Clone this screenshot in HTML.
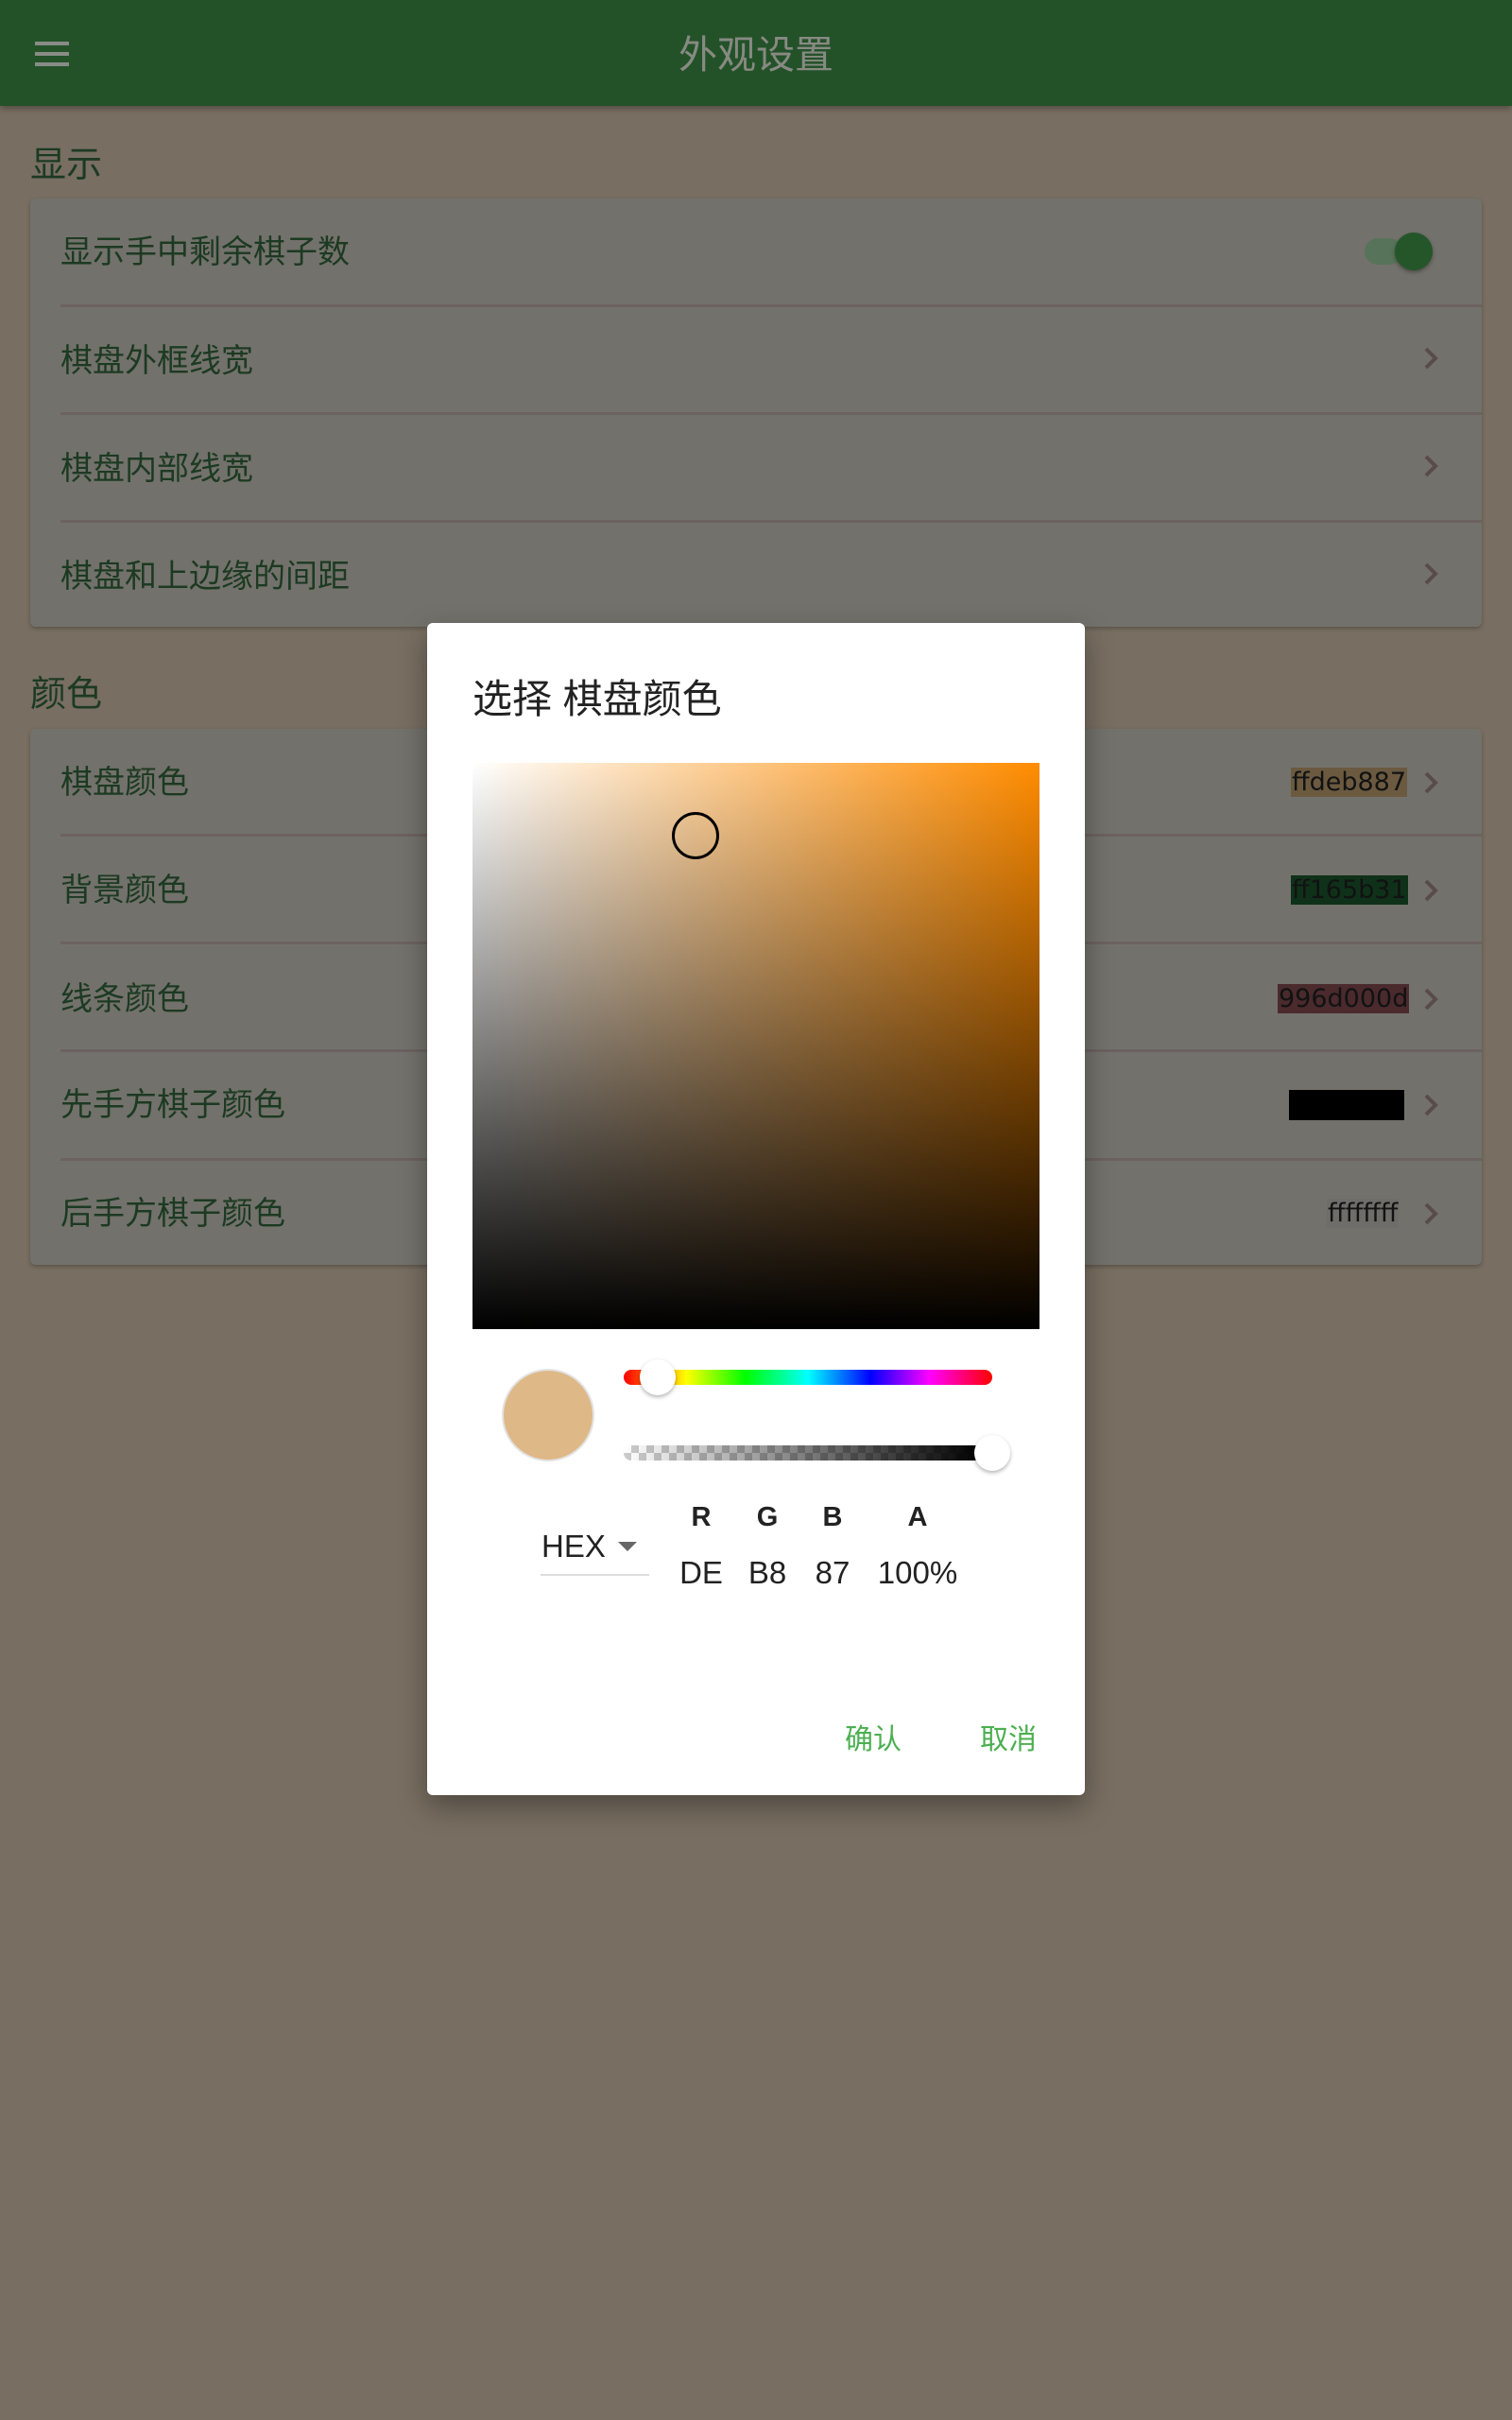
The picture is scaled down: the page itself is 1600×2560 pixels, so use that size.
<!DOCTYPE html>
<html><head><meta charset="utf-8"><style>
*{margin:0;padding:0;box-sizing:border-box}
body{width:1600px;height:2560px;background:#786e61;position:relative;overflow:hidden;font-family:"Liberation Sans","Noto Sans CJK SC",sans-serif}
.bar{position:absolute;left:0;top:0;width:1600px;height:112px;background:#235229;box-shadow:0 3px 6px rgba(0,0,0,.3)}
.title{position:absolute;left:0;width:1600px;top:30px;text-align:center;font-size:41px;color:#878a82;line-height:56px}
.ham{position:absolute;left:37px;width:36px;height:4px;background:#888c86}
.sec{position:absolute;left:32px;font-size:38px;color:#1c3a22;line-height:50px}
.card{position:absolute;left:32px;width:1536px;background:#73716b;border-radius:6px;box-shadow:0 2px 4px rgba(0,0,0,.25)}
.row{position:absolute;left:32px;font-size:34px;color:#1c3a22;line-height:44px}
.div{position:absolute;left:32px;width:1504px;height:3px;background:#6c6260}
.chev{position:absolute;left:1462px;width:40px;height:40px}
.sw{position:absolute;font-family:"DejaVu Sans",sans-serif;font-size:27px;color:#121212;line-height:31px;padding:0 1px}
.dlg{position:absolute;left:452px;top:659px;width:696px;height:1240px;background:#fff;border-radius:6px;box-shadow:0 12px 30px rgba(0,0,0,.35)}
.lbl{position:absolute;font-size:29px;font-weight:bold;color:#222;width:60px;text-align:center;margin-left:-30px}
.val{position:absolute;font-size:33px;color:#222;width:100px;text-align:center;margin-left:-50px}
</style></head><body>
<div class="bar">
<div class="ham" style="top:44px"></div><div class="ham" style="top:55px"></div><div class="ham" style="top:66px"></div>
<div class="title">外观设置</div>
</div>
<div class="sec" style="top:150px">显示</div>
<div class="card" style="top:210px;height:453px">
<div class="row" style="top:35px">显示手中剩余棋子数</div>
<div style="position:absolute;left:1412px;top:42px;width:40px;height:28px;border-radius:14px;background:#57735a"></div>
<div style="position:absolute;left:1444px;top:36px;width:40px;height:40px;border-radius:50%;background:#245629;box-shadow:0 2px 4px rgba(0,0,0,.35)"></div>
<div class="div" style="top:112px"></div>
<div class="row" style="top:150px">棋盘外框线宽</div>
<svg class="chev" style="top:149px" viewBox="0 0 40 40"><path d="M15 10 L25 20 L15 30" stroke="#5a4b4b" stroke-width="4" fill="none"/></svg>
<div class="div" style="top:226px"></div>
<div class="row" style="top:264px">棋盘内部线宽</div>
<svg class="chev" style="top:263px" viewBox="0 0 40 40"><path d="M15 10 L25 20 L15 30" stroke="#5a4b4b" stroke-width="4" fill="none"/></svg>
<div class="div" style="top:340px"></div>
<div class="row" style="top:378px">棋盘和上边缘的间距</div>
<svg class="chev" style="top:377px" viewBox="0 0 40 40"><path d="M15 10 L25 20 L15 30" stroke="#5a4b4b" stroke-width="4" fill="none"/></svg>
</div>
<div class="sec" style="top:710px">颜色</div>
<div class="card" style="top:771px;height:567px">
<div class="row" style="top:35px">棋盘颜色</div>
<div class="sw" style="left:1334px;top:41px;background:#6b5a40">ffdeb887</div>
<svg class="chev" style="top:37px" viewBox="0 0 40 40"><path d="M15 10 L25 20 L15 30" stroke="#5a4b4b" stroke-width="4" fill="none"/></svg>
<div class="div" style="top:111px"></div>
<div class="row" style="top:149px">背景颜色</div>
<div class="sw" style="left:1334px;top:155px;background:#0f3119">ff165b31</div>
<svg class="chev" style="top:151px" viewBox="0 0 40 40"><path d="M15 10 L25 20 L15 30" stroke="#5a4b4b" stroke-width="4" fill="none"/></svg>
<div class="div" style="top:225px"></div>
<div class="row" style="top:264px">线条颜色</div>
<div class="sw" style="left:1320px;top:270px;background:#4a2a2d">996d000d</div>
<svg class="chev" style="top:266px" viewBox="0 0 40 40"><path d="M15 10 L25 20 L15 30" stroke="#5a4b4b" stroke-width="4" fill="none"/></svg>
<div class="div" style="top:339px"></div>
<div class="row" style="top:376px">先手方棋子颜色</div>
<div style="position:absolute;left:1332px;top:382px;width:122px;height:32px;background:#000"></div>
<svg class="chev" style="top:378px" viewBox="0 0 40 40"><path d="M15 10 L25 20 L15 30" stroke="#5a4b4b" stroke-width="4" fill="none"/></svg>
<div class="div" style="top:454px"></div>
<div class="row" style="top:491px">后手方棋子颜色</div>
<div class="sw" style="left:1372px;top:497px;background:#6e6d69">ffffffff</div>
<svg class="chev" style="top:493px" viewBox="0 0 40 40"><path d="M15 10 L25 20 L15 30" stroke="#5a4b4b" stroke-width="4" fill="none"/></svg>
</div>
<div class="dlg">
<div style="position:absolute;left:48px;top:56px;font-size:42px;color:#222;line-height:50px">选择 棋盘颜色</div>
<div style="position:absolute;left:48px;top:148px;width:600px;height:599px;background:linear-gradient(to top,#000,rgba(0,0,0,0)),linear-gradient(to right,#fff,#ff8c00)"></div>
<div style="position:absolute;left:259px;top:200px;width:50px;height:50px;border:3px solid #000;border-radius:50%"></div>
<div style="position:absolute;left:79px;top:789px;width:98px;height:98px;border-radius:50%;background:#deb887;border:2px solid #e2e2e2"></div>
<div style="position:absolute;left:208px;top:790px;width:390px;height:16px;border-radius:8px;background:linear-gradient(to right,#f00,#ff0 17%,#0f0 33%,#0ff 50%,#00f 67%,#f0f 83%,#f00)"></div>
<div style="position:absolute;left:225px;top:779px;width:38px;height:38px;border-radius:50%;background:#fff;box-shadow:0 2px 4px rgba(0,0,0,.3)"></div>
<div style="position:absolute;left:208px;top:870px;width:378px;height:16px;border-radius:8px 0 0 8px;background:linear-gradient(to right,rgba(0,0,0,0),#000),repeating-conic-gradient(#ccc 0 25%,#fff 0 50%) 0 0/16px 16px"></div>
<div style="position:absolute;left:579px;top:859px;width:38px;height:38px;border-radius:50%;background:#fff;box-shadow:0 2px 4px rgba(0,0,0,.3)"></div>
<div style="position:absolute;left:121px;top:958px;font-size:33px;color:#222">HEX</div>
<svg style="position:absolute;left:200px;top:970px" width="24" height="14"><path d="M2 2 L22 2 L12 12Z" fill="#666"/></svg>
<div style="position:absolute;left:120px;top:1006px;width:115px;height:2px;background:#ddd"></div>
<div class="lbl" style="left:290px;top:930px">R</div>
<div class="lbl" style="left:360px;top:930px">G</div>
<div class="lbl" style="left:429px;top:930px">B</div>
<div class="lbl" style="left:519px;top:930px">A</div>
<div class="val" style="left:290px;top:986px">DE</div>
<div class="val" style="left:360px;top:986px">B8</div>
<div class="val" style="left:429px;top:986px">87</div>
<div class="val" style="left:519px;top:986px">100%</div>
<div style="position:absolute;left:442px;top:1156px;font-size:30px;color:#4caf50">确认</div>
<div style="position:absolute;left:585px;top:1156px;font-size:30px;color:#4caf50">取消</div>
</div>
</body></html>
